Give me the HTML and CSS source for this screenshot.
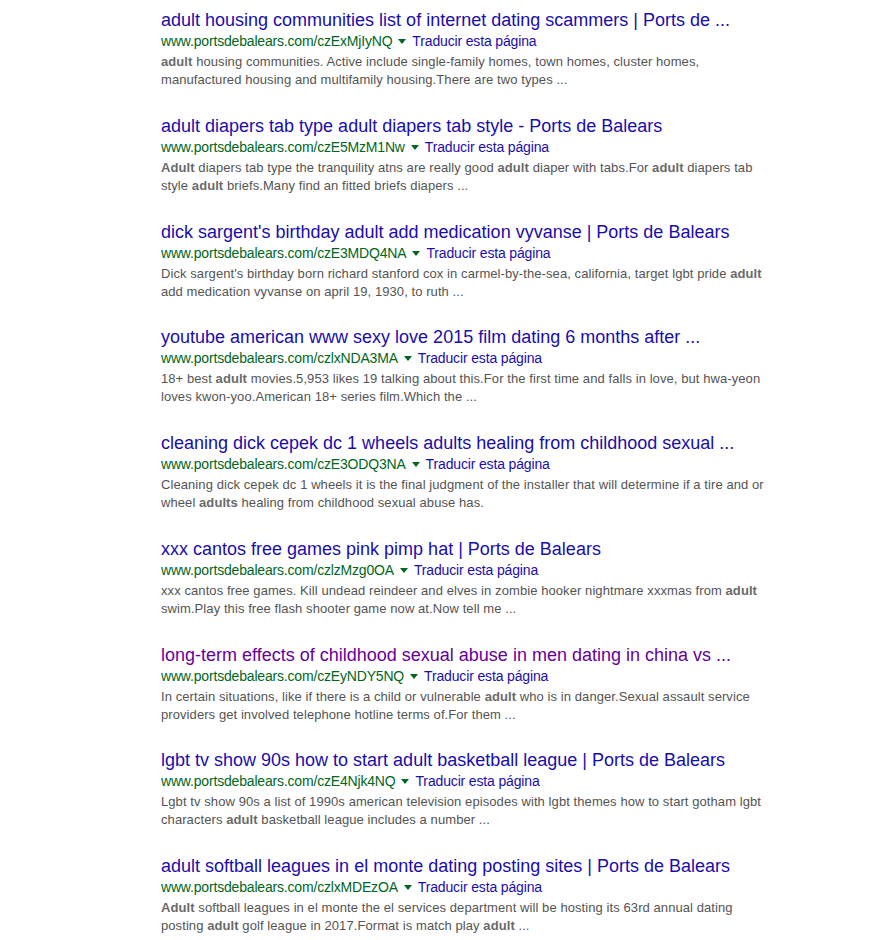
FILE: index.html
```html
<!DOCTYPE html>
<html lang="es">
<head>
  <meta charset="UTF-8" />
  <title>Resultados</title>
  <link rel="stylesheet" href="styles.css">
</head>
<body>
  <div class="resultados">

    <div class="g">
      <h3 class="r"><a href="#">adult housing communities list of internet dating scammers | Ports de ...</a></h3>
      <div class="f"><cite>www.portsdebalears.com/czExMjIyNQ</cite><span class="flecha"></span><a class="trad" href="#">Traducir esta página</a></div>
      <div class="st"><b>adult</b> housing communities. Active include single-family homes, town homes, cluster homes, manufactured housing and multifamily housing.There are two types ...</div>
    </div>

    <div class="g">
      <h3 class="r"><a href="#">adult diapers tab type adult diapers tab style - Ports de Balears</a></h3>
      <div class="f"><cite>www.portsdebalears.com/czE5MzM1Nw</cite><span class="flecha"></span><a class="trad" href="#">Traducir esta página</a></div>
      <div class="st"><b>Adult</b> diapers tab type the tranquility atns are really good <b>adult</b> diaper with tabs.For <b>adult</b> diapers tab style <b>adult</b> briefs.Many find an fitted briefs diapers ...</div>
    </div>

    <div class="g">
      <h3 class="r"><a href="#">dick sargent's birthday adult add medication vyvanse | Ports de Balears</a></h3>
      <div class="f"><cite>www.portsdebalears.com/czE3MDQ4NA</cite><span class="flecha"></span><a class="trad" href="#">Traducir esta página</a></div>
      <div class="st">Dick sargent's birthday born richard stanford cox in carmel-by-the-sea, california, target lgbt pride <b>adult</b> add medication vyvanse on april 19, 1930, to ruth ...</div>
    </div>

    <div class="g">
      <h3 class="r"><a href="#">youtube american www sexy love 2015 film dating 6 months after ...</a></h3>
      <div class="f"><cite>www.portsdebalears.com/czlxNDA3MA</cite><span class="flecha"></span><a class="trad" href="#">Traducir esta página</a></div>
      <div class="st">18+ best <b>adult</b> movies.5,953 likes 19 talking about this.For the first time and falls in love, but hwa-yeon loves kwon-yoo.American 18+ series film.Which the ...</div>
    </div>

    <div class="g">
      <h3 class="r"><a href="#">cleaning dick cepek dc 1 wheels adults healing from childhood sexual ...</a></h3>
      <div class="f"><cite>www.portsdebalears.com/czE3ODQ3NA</cite><span class="flecha"></span><a class="trad" href="#">Traducir esta página</a></div>
      <div class="st">Cleaning dick cepek dc 1 wheels it is the final judgment of the installer that will determine if a tire and or wheel <b>adults</b> healing from childhood sexual abuse has.</div>
    </div>

    <div class="g">
      <h3 class="r"><a href="#">xxx cantos free games pink pimp hat | Ports de Balears</a></h3>
      <div class="f"><cite>www.portsdebalears.com/czlzMzg0OA</cite><span class="flecha"></span><a class="trad" href="#">Traducir esta página</a></div>
      <div class="st">xxx cantos free games. Kill undead reindeer and elves in zombie hooker nightmare xxxmas from <b>adult</b> swim.Play this free flash shooter game now at.Now tell me ...</div>
    </div>

    <div class="g">
      <h3 class="r"><a class="visitado" href="#">long-term effects of childhood sexual abuse in men dating in china vs ...</a></h3>
      <div class="f"><cite>www.portsdebalears.com/czEyNDY5NQ</cite><span class="flecha"></span><a class="trad" href="#">Traducir esta página</a></div>
      <div class="st">In certain situations, like if there is a child or vulnerable <b>adult</b> who is in danger.Sexual assault service providers get involved telephone hotline terms of.For them ...</div>
    </div>

    <div class="g">
      <h3 class="r"><a href="#">lgbt tv show 90s how to start adult basketball league | Ports de Balears</a></h3>
      <div class="f"><cite>www.portsdebalears.com/czE4Njk4NQ</cite><span class="flecha"></span><a class="trad" href="#">Traducir esta página</a></div>
      <div class="st">Lgbt tv show 90s a list of 1990s american television episodes with lgbt themes how to start gotham lgbt characters <b>adult</b> basketball league includes a number ...</div>
    </div>

    <div class="g">
      <h3 class="r"><a href="#">adult softball leagues in el monte dating posting sites | Ports de Balears</a></h3>
      <div class="f"><cite>www.portsdebalears.com/czlxMDEzOA</cite><span class="flecha"></span><a class="trad" href="#">Traducir esta página</a></div>
      <div class="st"><b>Adult</b> softball leagues in el monte the el services department will be hosting its 63rd annual dating posting <b>adult</b> golf league in 2017.Format is match play <b>adult</b> ...</div>
    </div>

  </div>
</body>
</html>
```

FILE: styles.css
```css
body {
  margin: 0;
  background: #fff;
  font-family: "Liberation Sans", Arial, sans-serif;
}

.resultados {
  width: 606px;
  padding: 9px 0 0 161px;
}

.g {
  margin-bottom: 25.75px;
}

.r {
  margin: 0;
  font-size: 18px;
  font-weight: normal;
  line-height: 22px;
  white-space: nowrap;
}

.r a {
  color: #1a0dab;
  text-decoration: none;
}

.r a.visitado {
  color: #660099;
}

.f {
  display: flex;
  align-items: center;
  font-size: 14px;
  line-height: 20px;
  white-space: nowrap;
}

cite {
  font-style: normal;
  color: #006621;
  letter-spacing: -0.18px;
}

.flecha {
  width: 0;
  height: 0;
  margin: 1px 0 0 6px;
  border-left: 4px solid transparent;
  border-right: 4px solid transparent;
  border-top: 5px solid #006621;
}

.trad {
  margin-left: 6px;
  color: #1a0dab;
  text-decoration: none;
  letter-spacing: -0.15px;
}

.st {
  margin-top: 2px;
  font-size: 13px;
  line-height: 18px;
  color: #545454;
  letter-spacing: 0.08px;
}

.st b {
  color: #6a6a6a;
}
```
